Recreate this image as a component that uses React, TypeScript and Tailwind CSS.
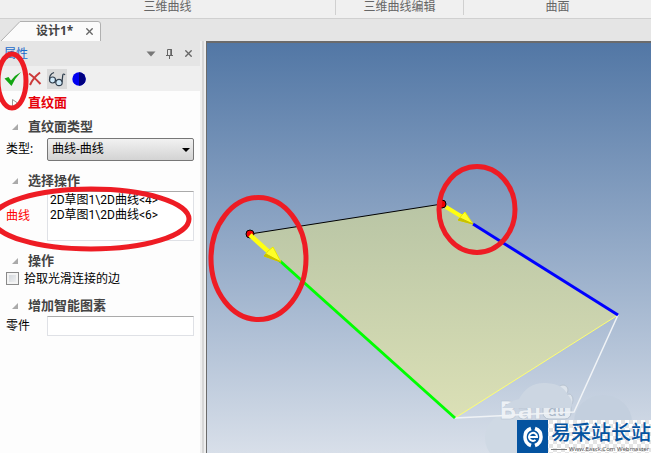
import { ReactNode, useState } from "react";
import { X } from "lucide-react";

const FONT = "font-['Noto_Sans','Noto_Sans_CJK_SC',sans-serif]";

const ribbonGroups = [
  { label: "三维曲线", width: "w-[336px]" },
  { label: "三维曲线编辑", width: "w-32" },
  { label: "曲面", width: "flex-1" },
];

const Ribbon = () => (
  <div className="flex h-[19px] border-b border-[#d0d0d0] bg-[#f0f0f0] text-xs leading-[14px] text-[#666]">
    {ribbonGroups.map((group) => (
      <div key={group.label} className={`${group.width} h-[15px] border-r border-[#d0d0d0] text-center last:border-r-0`}>
        {group.label}
      </div>
    ))}
  </div>
);

const TabStrip = () => (
  <div className="relative flex h-[22px] items-end bg-[#e5e5e5]">
    <svg className="absolute bottom-0 left-0" width="102" height="20" viewBox="0 0 102 20">
      <path d="M1 20 L20 .5 H98 Q100.500 .5 100.500 3 V20" fill="#fbfbfb" stroke="#b0b0b0" />
    </svg>
    <div className="relative flex h-5 w-[101px] items-center justify-between pr-1.5 pl-9">
      <span className="text-xs font-bold text-[#444]">设计1*</span>
      <button aria-label="关闭" className="text-[#666]">
        <X size={11} strokeWidth={3} />
      </button>
    </div>
  </div>
);

const PanelHeader = () => (
  <div className="flex h-[25px] items-center justify-between bg-[#e5e5e5] pr-1.5 pl-1">
    <h1 className="text-xs text-[#1b6ac9]">属性</h1>
    <div className="flex items-center gap-2 text-[#666]">
      <button aria-label="菜单">
        <svg width="10" height="6" viewBox="0 0 10 6"><path d="M.5 .5h9L5 5.500z" fill="#777" /></svg>
      </button>
      <button aria-label="固定">
        <svg width="11" height="11" viewBox="0 0 11 11" fill="none" stroke="#666">
          <path d="M3.500 7V1.500H7.500V7M2 7.500H9M5.500 8V11" />
          <path d="M7 1v6" strokeWidth="1.500" />
        </svg>
      </button>
      <button aria-label="关闭面板"><X size={11} strokeWidth={3} /></button>
    </div>
  </div>
);

const Toolbar = () => (
  <div className="flex h-[25px] items-center bg-[#efefef] pl-1">
    <button aria-label="确定" className="w-6">
      <svg width="18" height="16" viewBox="0 0 18 16">
        <path d="M.5 7.500 L4.500 6 L7 9.500 Q11 4 17 1 Q11 7 7.500 15 Z" fill="#12a512" />
      </svg>
    </button>
    <button aria-label="取消" className="w-[19px]">
      <svg width="14" height="16" viewBox="0 0 14 16">
        <path d="M1 2.500 Q6 6 12.500 13 M12 1.500 Q5 7 2 14" fill="none" stroke="#cc3a3a" strokeWidth="2" />
      </svg>
    </button>
    <button aria-label="预览" className="flex size-5 items-center justify-center bg-[#dadada]">
      <svg width="18" height="16" viewBox="0 0 18 16" fill="none" stroke="#2f3d4c" strokeWidth="1.200">
        <circle cx="4.500" cy="9" r="3" fill="#cfe8f8" />
        <circle cx="11" cy="11.500" r="3.200" fill="#cfe8f8" />
        <path d="M1.500 9 Q1 3.500 6 1.500 M7.300 9.500 L8.500 10 M14 11 L14.800 4 Q15.500 2 17 4" />
      </svg>
    </button>
    <button aria-label="着色" className="ml-[5px]">
      <svg width="14" height="14" viewBox="0 0 14 14">
        <circle cx="7" cy="7" r="6.700" fill="#0000f0" />
        <path d="M7 .3a6.700 6.700 0 0 1 0 13.400z" fill="#000080" />
      </svg>
    </button>
  </div>
);

const Heading = ({ children, red = false }: { children: ReactNode; red?: boolean }) => (
  <h2 className={`flex h-5 items-center text-[13px] font-bold ${red ? "text-[#e6000a]" : "text-[#444]"}`}>
    <svg className="mr-2.5 ml-3" width="6" height="8" viewBox="0 0 6 8">
      {red ? <path d="M.5 .5v7L5.500 4z" fill="#fff" stroke="#999" /> : <path d="M6 1v6H0z" fill="#aaa" />}
    </svg>
    {children}
  </h2>
);

const PropertyPanel = () => {
  const [smooth, setSmooth] = useState(false);

  return (
    <div className="w-[200px] shrink-0 bg-[#fdfdfd] text-xs text-black">
      <PanelHeader />
      <Toolbar />
      <div className="flex flex-col gap-2.5 pt-0.5 pr-1.5">
        <section>
          <Heading red>直纹面</Heading>
          <div className="h-1" />
          <Heading>直纹面类型</Heading>
          <div className="flex h-6 items-center pl-1.5">
            <label htmlFor="type" className="w-[41px]">类型:</label>
            <div className="relative flex-1">
              <select
                id="type"
                className="h-[23px] w-full appearance-none rounded-xs border border-[#777] bg-linear-to-b from-[#f2f2f2] to-[#d3d3d3] pl-1"
              >
                <option>曲线-曲线</option>
              </select>
              <svg className="pointer-events-none absolute top-2.5 right-1" width="8" height="4" viewBox="0 0 8 4">
                <path d="M0 0h8L4 4z" />
              </svg>
            </div>
          </div>
        </section>
        <section>
          <Heading>选择操作</Heading>
          <div className="flex h-[50px] items-center pl-1.5">
            <label htmlFor="curves" className="w-[41px] text-[#f00]">曲线</label>
            <textarea
              id="curves"
              readOnly
              className="h-full flex-1 resize-none overflow-hidden border border-[#dfe1e6] border-t-[#aaa] bg-white px-0.5 pt-px font-['Roboto','Noto_Sans_CJK_SC',sans-serif] leading-[15px]"
              defaultValue={"2D草图1\\2D曲线<4>\n2D草图1\\2D曲线<6>"}
            />
          </div>
        </section>
        <section>
          <Heading>操作</Heading>
          <label className="flex h-[15px] items-center gap-[5px] pl-1.5">
            <input
              type="checkbox"
              checked={smooth}
              onChange={(e) => setSmooth(e.target.checked)}
              className="size-[13px] appearance-none border border-[#8a8a8a] bg-linear-to-br from-[#cdd2d8] to-[#f6f6f6] shadow-[inset_0_0_0_2px_#f4f4f4] checked:bg-[#456]"
            />
            拾取光滑连接的边
          </label>
        </section>
        <section>
          <Heading>增加智能图素</Heading>
          <div className="flex h-5 items-center pl-1.5">
            <label htmlFor="part" className="w-[41px]">零件</label>
            <input id="part" className="h-full min-w-0 flex-1 border border-[#dfe1e6] border-t-[#aaa] bg-white px-1" />
          </div>
        </section>
      </div>
    </div>
  );
};

const Scene = () => (
  <svg className="absolute top-0 left-0" width="444" height="410" viewBox="207 43 444 410">
    <defs>
      <linearGradient id="face" x1="0" y1="0" x2="0" y2="1">
        <stop offset="0" stopColor="#b9c5a5" />
        <stop offset="1" stopColor="#dbe0b6" />
      </linearGradient>
    </defs>
    <path d="M250 234 L442 204 L618 315 L455 418Z" fill="url(#face)" />
    <path d="M250 234 L442 204" stroke="#000" />
    <path d="M455 418 L618 315" stroke="#ffff70" />

    {/* baidu cloud */}
    <ellipse cx="603" cy="422" rx="29" ry="27" fill="#c3cfde" />
    <ellipse cx="512" cy="438" rx="27" ry="26" fill="#cfd9e4" />
    <g fill="#dde4ec" stroke="#b8c3d0">
      <circle cx="563" cy="390" r="5" />
      <ellipse cx="569" cy="400" rx="4" ry="6" />
    </g>
    <text x="499" y="419" fontFamily="DejaVu Sans" fontWeight="bold" fontSize="24" fill="#edf1f5" stroke="#b4c0ce" strokeWidth=".5">
      Bai
    </text>
    <rect x="543" y="400" width="28" height="19" rx="6" fill="#e6ecf2" stroke="#b4c0ce" />
    <text x="548" y="416" fontFamily="DejaVu Sans" fontSize="14" fill="#a9b7c8">du</text>
    <path d="M502 408 Q510 401 519 399 Q528 382 546 383 Q563 384 567 394 Q574 401 571 408Z" fill="#ccd6e2" />
    <path d="M618 315 L574 412 L455 418" fill="none" stroke="#f0f3f6" strokeWidth="1.500" />

    <path d="M280 261 L455 418" stroke="#0f0" strokeWidth="3" />
    <path d="M473 224 L618 315" stroke="#00f" strokeWidth="3" />
    <g fill="#f00000" stroke="#000">
      <circle cx="250" cy="234" r="4" />
      <circle cx="442" cy="204" r="4" />
    </g>
    <path d="M250 235 L270 253" stroke="#ffff10" strokeWidth="4.500" />
    <path d="M446 207 L464 218" stroke="#ffff10" strokeWidth="4" />
    <path d="M273 247 L281 262 L264 256 L268 251Z" fill="#ffff28" stroke="#e8e800" />
    <path d="M281 262 L264 256 L266 254Z" fill="#c8c000" stroke="#c8c000" />
    <path d="M465 212 L473 224 L458 220 L462 215Z" fill="#ffff28" stroke="#e8e800" />
    <path d="M473 224 L458 220 L460 218Z" fill="#c8c000" stroke="#c8c000" />
  </svg>
);

const Watermark = () => (
  <div className="absolute right-0 bottom-0 flex h-[33px] w-[134px] overflow-hidden bg-[repeating-conic-gradient(#fff_0_25%,#e4e4e4_0_50%)] bg-size-[8px_8px]">
    <div className="flex w-[31px] shrink-0 items-center justify-center bg-[#0453a0]">
      <svg width="22" height="22" viewBox="0 0 22 22" fill="none" stroke="#fff">
        <path d="M9 2.500 A9 9 0 0 0 9 19.500 M13 2.500 A9 9 0 0 1 13 19.500" strokeWidth="3.500" />
        <path d="M7 11 H15 A4 4 0 1 0 13.500 14" strokeWidth="2" />
      </svg>
    </div>
    <div className="pl-[3px] whitespace-nowrap">
      <div className="text-xl leading-[26px] font-medium text-[#0453a0]">易采站长站</div>
      <div className="flex items-center gap-0.5 text-[6px] leading-[6px] text-[#555]">
        <span className="w-4 border-t border-[#777]" />
        Www.Easck.Com Webmaster
      </div>
    </div>
  </div>
);

const Annotations = () => (
  <svg className="pointer-events-none absolute top-0 left-0" width="520" height="330" viewBox="0 0 520 330" fill="none" stroke="#ee1c24" strokeWidth="5">
    <ellipse cx="12" cy="81" rx="14" ry="27" />
    <ellipse cx="91" cy="219" rx="98" ry="30" />
    <ellipse cx="258.500" cy="258.500" rx="47.500" ry="61" />
    <ellipse cx="477" cy="209.500" rx="38" ry="43" />
  </svg>
);

const App = () => (
  <div className={`relative flex min-h-screen flex-col overflow-hidden bg-[#e5e5e5] ${FONT}`}>
    <Ribbon />
    <TabStrip />
    <div className="flex flex-1">
      <PropertyPanel />
      <div className="w-1.5 shrink-0 border-x-2 border-[#eee] bg-[#d6d6d6]" />
      <div className="relative flex-1 overflow-hidden border-t-2 border-l border-[#6b6b6b] bg-linear-to-b from-[#5277a5] to-[#d8dfe9]">
        <Scene />
        <Watermark />
      </div>
    </div>
    <Annotations />
  </div>
);

export default App;
